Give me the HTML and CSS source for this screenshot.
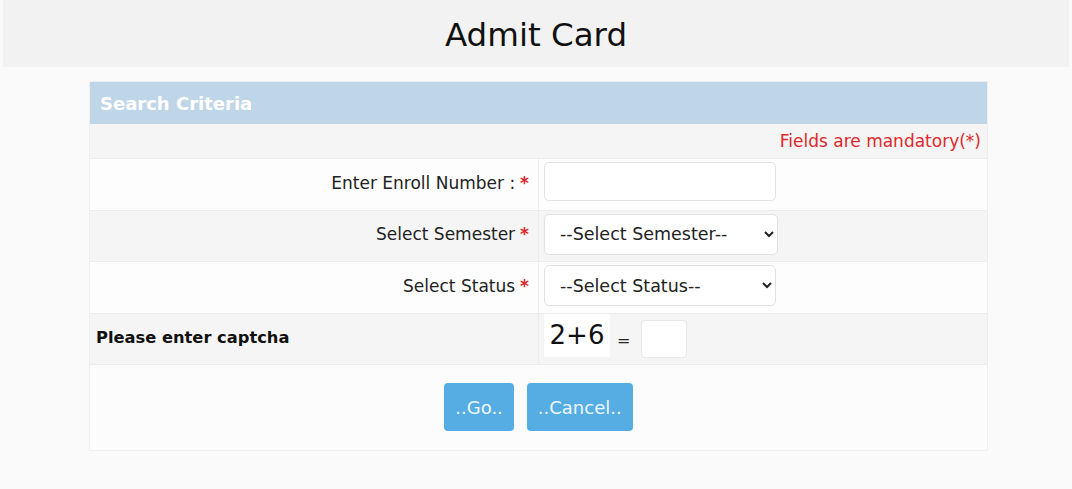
FILE: index.html
```html
<!DOCTYPE html>
<html>
<head>
<meta charset="utf-8">
<link rel="stylesheet" href="styles.css">
</head>
<body>
<header class="topbar"><h1 class="title">Admit Card</h1></header>
<main class="panel">
  <div class="panel-head">Search Criteria</div>
  <div class="mandatory">Fields are mandatory(*)</div>
  <div class="row white">
    <div class="label">Enter Enroll Number : <span class="star">*</span></div>
    <div class="field"><input class="text-input" type="text"></div>
  </div>
  <div class="row grey">
    <div class="label">Select Semester <span class="star">*</span></div>
    <div class="field"><select class="sel sel-sem"><option>--Select Semester--</option></select></div>
  </div>
  <div class="row white">
    <div class="label">Select Status <span class="star">*</span></div>
    <div class="field"><select class="sel sel-status"><option>--Select Status--</option></select></div>
  </div>
  <div class="row grey captcha-row">
    <div class="label captcha-label">Please enter captcha</div>
    <div class="field captcha-field">
      <span class="captcha">2+6</span>
      <span class="eq">=</span>
      <input class="cap-input" type="text">
    </div>
  </div>
  <div class="actions">
    <button class="btn">..Go..</button>
    <button class="btn">..Cancel..</button>
  </div>
</main>
</body>
</html>
```

FILE: styles.css
```css
* { box-sizing: border-box; }
html, body { margin: 0; padding: 0; }
body {
  background: #fafafa;
  font-family: "DejaVu Sans", Verdana, sans-serif;
  color: #222;
  height: 489px;
  overflow: hidden;
}
.topbar {
  margin: 0 3px;
  height: 67px;
  background: #f2f2f2;
  display: flex;
  align-items: center;
  justify-content: center;
}
.title {
  margin: 0;
  font-weight: normal;
  font-size: 32.5px;
  color: #111;
  padding-top: 3px;
}
.panel {
  width: 899px;
  margin: 14px 0 0 89px;
  border: 1px solid #efefef;
  background: #fcfcfc;
}
.panel-head {
  height: 42px;
  background: #bfd6e8;
  color: #fff;
  font-weight: bold;
  font-size: 18px;
  display: flex;
  align-items: center;
  padding-left: 10px;
}
.mandatory {
  height: 34px;
  background: #f5f5f5;
  color: #e0282c;
  font-size: 17px;
  display: flex;
  align-items: center;
  justify-content: flex-end;
  padding-right: 6px;
}
.row {
  display: grid;
  grid-template-columns: 449px 1fr;
  height: 51.5px;
  border-top: 1px solid #ececec;
}
.row.white { background: #fdfdfd; }
.row.grey { background: #f5f5f5; }
.label {
  display: flex;
  align-items: center;
  justify-content: flex-end;
  padding-right: 9px;
  padding-bottom: 3px;
  font-size: 17px;
  color: #222;
  border-right: 1px solid #ececec;
}
.star { color: #e0282c; font-weight: bold; margin-left: 5px; }
.field {
  display: flex;
  align-items: flex-start;
  padding: 3px 0 0 5px;
}
.text-input {
  width: 232px;
  height: 39px;
  border: 1px solid #e2e2e2;
  border-radius: 5px;
  background: #fff;
  font-size: 16px;
}
.sel {
  height: 41px;
  border: 1px solid #e2e2e2;
  border-radius: 5px;
  background: #fff;
  font-family: "DejaVu Sans", Verdana, sans-serif;
  font-size: 17.5px;
  color: #222;
  padding-left: 11px;
}
.sel-sem { width: 234px; }
.sel-status { width: 232px; }
.captcha-label {
  justify-content: flex-start;
  padding-left: 6px;
  font-size: 16.3px;
  font-weight: bold;
  color: #111;
}
.captcha-field { padding-top: 0; }
.captcha {
  background: #fff;
  font-size: 26px;
  color: #111;
  height: 43px;
  width: 66px;
  display: flex;
  align-items: center;
  justify-content: center;
}
.eq {
  font-size: 16px;
  margin: 17px 0 0 7px;
}
.cap-input {
  margin: 6px 0 0 11px;
  width: 46px;
  height: 38px;
  border: 1px solid #e8e8e8;
  border-radius: 4px;
  background: #fff;
}
.actions {
  border-top: 1px solid #ececec;
  height: 86px;
  display: flex;
  justify-content: center;
  align-items: flex-start;
  gap: 13px;
  padding-top: 18px;
  background: #fcfcfc;
}
.btn {
  height: 48px;
  padding: 0 11px;
  border: none;
  border-radius: 4px;
  background: #56ade3;
  color: #eef7fd;
  font-family: "DejaVu Sans", Verdana, sans-serif;
  font-size: 18px;
}
```
